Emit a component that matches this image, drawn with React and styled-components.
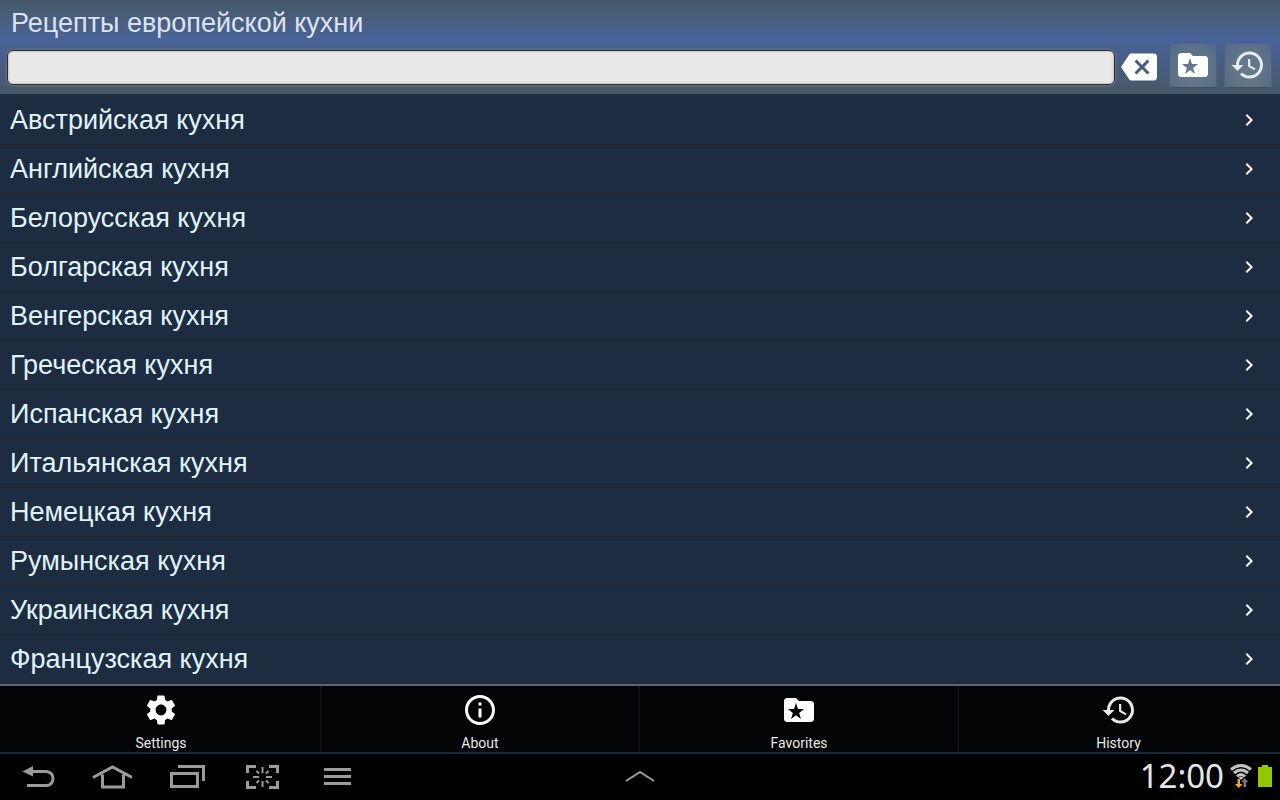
import React from "react";
import styled, { createGlobalStyle } from "styled-components";
import { MdBackspace, MdChevronRight, MdHistory, MdInfoOutline, MdSettings } from "react-icons/md";

const GlobalStyle = createGlobalStyle`
  * {
    box-sizing: border-box;
  }

  body {
    margin: 0;
    background: #000;
  }
`;

const Page = styled.div`
  display: flex;
  flex-direction: column;
  min-height: 100vh;
  font-family: "Liberation Sans", Arial, sans-serif;
  background: #1d2c41;
`;

const Header = styled.header`
  padding: 6px 8px 0 7px;
  border-bottom: 2px solid #1d2f42;
  background: linear-gradient(#465868 0%, #475f80 22%, #48639a 42%, #475f8c 56%, #465c78 80%, #465967 100%);
`;

const Title = styled.h1`
  margin: 0;
  padding: 0 4px;
  font-size: 27px;
  font-weight: 400;
  line-height: 34px;
  color: #dfe3ee;
`;

const SearchBar = styled.form`
  display: flex;
  align-items: flex-start;
  gap: 12px;
  height: 54px;
  padding-top: 3px;
`;

const SearchField = styled.div`
  flex: 1;
  display: flex;
  align-items: center;
  gap: 6px;
  height: 48px;
`;

const SearchInput = styled.input`
  flex: 1;
  min-width: 0;
  height: 35px;
  padding: 0 8px;
  border: 1px solid #2a2c34;
  border-radius: 6px;
  outline: none;
  font-size: 20px;
  color: #222;
  background: #e9e9e9;
  box-shadow: 0 0 2px 1px #6e7278, inset 0 0 2px 1px #c8c4c0;
`;

const ClearButton = styled.button`
  display: flex;
  padding: 0;
  border: 0;
  color: #fff;
  background: none;
`;

const HeaderActions = styled.div`
  display: flex;
  gap: 7px;
`;

const HeaderButton = styled.button`
  display: flex;
  align-items: flex-start;
  justify-content: center;
  width: 48px;
  height: 45px;
  padding: 3px 0 0;
  border: 1px solid #4b617c;
  border-top-color: #4c669a;
  border-bottom-color: #3f5166;
  color: ${props => props.$tint || "#fff"};
  background: radial-gradient(ellipse at 50% 60%, #687b8a, #5c7286 60%, #506a90);
`;

const CuisineList = styled.ul`
  flex: 1;
  margin: 0;
  padding: 0;
  list-style: none;
`;

const CuisineLink = styled.a`
  display: flex;
  align-items: center;
  justify-content: space-between;
  height: 49px;
  padding: 0 19px 0 10px;
  border-bottom: 1px solid #24262f;
  font-size: 27px;
  color: #e0f4fc;
  text-decoration: none;
`;

const Menu = styled.nav`
  display: grid;
  grid-template-columns: repeat(4, 1fr);
  height: 68px;
  padding: 0 2px;
  border-top: 2px solid #5d666e;
  background: #020406;
`;

const MenuButton = styled.button`
  display: flex;
  flex-direction: column;
  align-items: center;
  gap: 4px;
  padding: 6px 0 0;
  border: 0;
  border-right: 1px solid #15181b;
  font-family: Roboto, sans-serif;
  font-size: 14px;
  line-height: 22px;
  color: #e8e8e8;
  background: none;

  &:last-child {
    border-right: 0;
  }
`;

const SystemBar = styled.footer`
  display: grid;
  grid-template-columns: 1fr auto 1fr;
  align-items: center;
  height: 48px;
  padding: 0 8px 2px;
  border-top: 2px solid #162a3b;
  background: #000;
`;

const SystemKeys = styled.div`
  display: flex;
  gap: 35px;
  padding-left: 9px;
`;

const SystemButton = styled.button`
  display: flex;
  padding: 0;
  border: 0;
  color: #9b9b9b;
  background: none;
`;

const Status = styled.div`
  display: flex;
  align-items: center;
  justify-content: flex-end;
  gap: 6px;
`;

const Clock = styled.time`
  font-family: "Noto Sans", sans-serif;
  font-size: 33px;
  line-height: 44px;
  color: #e6e6e6;
`;

const FolderStar = () => (
    <svg width="36" height="36" viewBox="0 0 24 24" fill="#fff" aria-hidden="true">
        <path fillRule="evenodd" d="M20 6h-8l-2-2H4c-1.100 0-2 .9-2 2v12c0 1.100.9 2 2 2h16c1.100 0 2-.9 2-2V8c0-1.100-.9-2-2-2zM13.300 18 10 15.500 6.700 18l1.200-4L4.600 11.400h4.100L10 7.300l1.300 4.100h4.100L12.100 14z" />
    </svg>
);

const BackIcon = () => (
    <svg width="40" height="30" viewBox="0 0 40 30" fill="none" stroke="currentColor" strokeWidth="3" aria-hidden="true">
        <path d="M15 10.500h14.500a6.500 7 0 0 1 0 14H10" />
        <path d="M5.500 10.500 16 5v10.500z" fill="currentColor" stroke="none" />
    </svg>
);

const HomeIcon = () => (
    <svg width="40" height="30" viewBox="0 0 40 30" fill="none" stroke="currentColor" strokeWidth="3" aria-hidden="true">
        <path d="M1 16.500 20.500 6 40 16.500M10.500 13.500v12.500h21V13.500" />
    </svg>
);

const RecentIcon = () => (
    <svg width="40" height="30" viewBox="0 0 40 30" fill="none" stroke="currentColor" aria-hidden="true">
        <path strokeWidth="3" d="M4.500 12.500h26v13h-26zM11 5.500h25.500V20" />
    </svg>
);

const CaptureIcon = () => (
    <svg width="40" height="30" viewBox="0 0 40 30" fill="none" stroke="currentColor" aria-hidden="true">
        <path strokeWidth="3" d="M5.500 12V5.500h8.500M27 5.500h8.500V12M35.500 20v6.500H27M14 26.500H5.500V20" />
        <path strokeWidth="2" d="M20.500 6v6M20.500 20v6M11 16h6M24 16h6M14.500 10l2.500 2.500M26.500 10 24 12.500M14.500 22l2.500-2.500M26.500 22 24 19.500" />
    </svg>
);

const MenuIcon = () => (
    <svg width="40" height="30" viewBox="0 0 40 30" fill="currentColor" aria-hidden="true">
        <path d="M7 7h27v3H7zM7 14h27v3H7zM7 21h27v3H7z" />
    </svg>
);

const ExpandIcon = () => (
    <svg width="30" height="12" viewBox="0 0 30 12" fill="none" stroke="currentColor" strokeWidth="2" aria-hidden="true">
        <path d="M1 11 15 2l14 9" />
    </svg>
);

const WifiIcon = () => (
    <svg width="22" height="26" viewBox="0 0 22 26" fill="none" aria-hidden="true">
        <path stroke="#c4c4c4" strokeWidth="3" d="M1 6.500Q11-1.500 21 6.500M4 10Q11 4 18 10M7 13.500Q11 9.500 15 13.500" />
        <path fill="#c4c4c4" d="M8.500 14.500Q11 12.500 13.500 14.500L11 17z" />
        <path fill="#f5a623" d="M7.500 16h2.500v5h2.500L8.800 25 5 21h2.500z" />
        <path fill="#77777f" d="M13.500 24H16v-5h2l-3.300-4-3.200 4h2z" />
    </svg>
);

const BatteryIcon = () => (
    <svg width="14" height="22" viewBox="0 0 14 22" fill="#91c800" aria-hidden="true">
        <path d="M4 0h6v2h4v20H0V2h4z" />
    </svg>
);

const cuisines = [
    "Австрийская кухня",
    "Английская кухня",
    "Белорусская кухня",
    "Болгарская кухня",
    "Венгерская кухня",
    "Греческая кухня",
    "Испанская кухня",
    "Итальянская кухня",
    "Немецкая кухня",
    "Румынская кухня",
    "Украинская кухня",
    "Французская кухня",
];

const menuItems = [
    { label: "Settings", icon: <MdSettings size={36} color="#fff" /> },
    { label: "About", icon: <MdInfoOutline size={36} color="#fff" /> },
    { label: "Favorites", icon: <FolderStar /> },
    { label: "History", icon: <MdHistory size={36} /> },
];

const systemKeys = [
    { label: "Back", icon: <BackIcon /> },
    { label: "Home", icon: <HomeIcon /> },
    { label: "Recent apps", icon: <RecentIcon /> },
    { label: "Screenshot", icon: <CaptureIcon /> },
    { label: "Menu", icon: <MenuIcon /> },
];

const App = () => {
    return (
        <Page>
            <GlobalStyle />
            <Header>
                <Title>Рецепты европейской кухни</Title>
                <SearchBar onSubmit={e => e.preventDefault()}>
                    <SearchField>
                        <SearchInput type="text" aria-label="Поиск" />
                        <ClearButton type="reset" aria-label="Clear"><MdBackspace size={36} /></ClearButton>
                    </SearchField>
                    <HeaderActions>
                        <HeaderButton type="button" aria-label="Favorites"><FolderStar /></HeaderButton>
                        <HeaderButton type="button" aria-label="History" $tint="#e6eaf2"><MdHistory size={36} /></HeaderButton>
                    </HeaderActions>
                </SearchBar>
            </Header>
            <CuisineList>
                {
                    cuisines.map(name => (
                        <li key={name}>
                            <CuisineLink href="#">
                                {name}
                                <MdChevronRight size={24} color="#fff" />
                            </CuisineLink>
                        </li>
                    ))
                }
            </CuisineList>
            <Menu>
                {
                    menuItems.map(item => (
                        <MenuButton key={item.label} type="button">
                            {item.icon}
                            {item.label}
                        </MenuButton>
                    ))
                }
            </Menu>
            <SystemBar>
                <SystemKeys>
                    {
                        systemKeys.map(key => (
                            <SystemButton key={key.label} type="button" aria-label={key.label}>{key.icon}</SystemButton>
                        ))
                    }
                </SystemKeys>
                <SystemButton type="button" aria-label="Expand"><ExpandIcon /></SystemButton>
                <Status>
                    <Clock>12:00</Clock>
                    <WifiIcon />
                    <BatteryIcon />
                </Status>
            </SystemBar>
        </Page>
    );
}

export default App;
